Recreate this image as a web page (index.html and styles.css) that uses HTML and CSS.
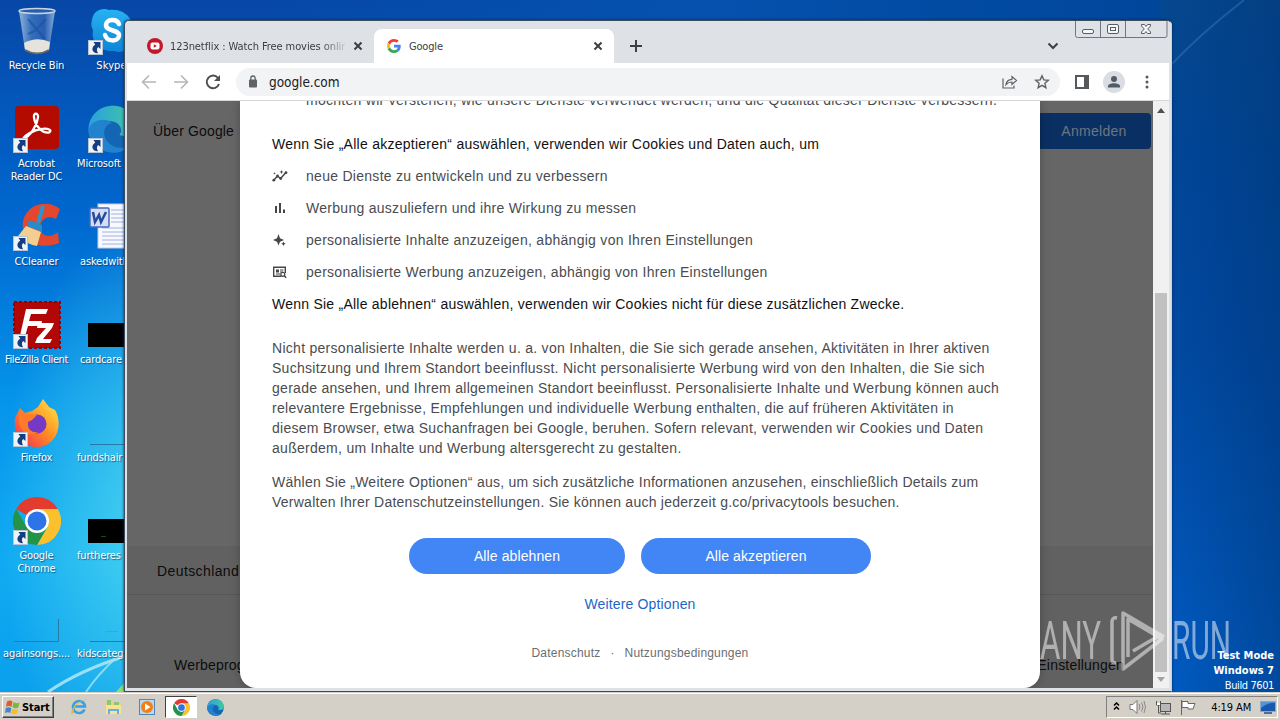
FILE: index.html
```html
<!DOCTYPE html>
<html lang="de">
<head>
    <meta charset="utf-8">
    <title>Google</title>
    <link rel="stylesheet" href="styles.css">
</head>
<body>
<svg width="0" height="0" class="defs">
    <defs>
        <linearGradient id="binGlass" x1="0" x2="1"><stop offset="0" stop-color="#a9c4e4"/><stop offset=".35" stop-color="#3d74bd"/><stop offset=".7" stop-color="#2c62b2"/><stop offset="1" stop-color="#9dbbe0"/></linearGradient>
        <linearGradient id="edgeTop" x1="0" x2="1"><stop offset="0" stop-color="#2b9fe0"/><stop offset="1" stop-color="#41c9a0"/></linearGradient>
        <linearGradient id="fox" x1="1" y1="0" x2="0" y2="1"><stop offset="0" stop-color="#fff04a"/><stop offset=".5" stop-color="#ff8a22"/><stop offset="1" stop-color="#f0245e"/></linearGradient>
        <linearGradient id="skype" x1="0" y1="0" x2="0" y2="1"><stop offset="0" stop-color="#28b2f2"/><stop offset="1" stop-color="#0c86d6"/></linearGradient>
        <symbol id="shortcut" viewBox="0 0 15 15">
            <rect x=".5" y=".5" width="14" height="14" fill="#eef3f8" stroke="#b7c3d2"/>
            <path d="M5.500 2H12.500V9L10.200 7C8.500 8.500 8.500 10.500 10 13.200 5 13.500 1.800 8.500 7.200 4.500z" fill="#153e82"/>
        </symbol>
        <symbol id="chrome" viewBox="0 0 48 48">
            <path d="M24 24L3.200 12A24 24 0 0 1 44.800 12z" fill="#e33b2e"/>
            <path d="M24 12H44.800A24 24 0 0 1 24 48L34.400 30z" fill="#fbc02d"/>
            <path d="M24 48A24 24 0 0 1 3.200 12L13.600 30 24 36 34.400 30z" fill="#239347"/>
            <circle cx="24" cy="24" r="12" fill="#fff"/>
            <circle cx="24" cy="24" r="9.500" fill="#2d74e8"/>
        </symbol>
        <symbol id="edge" viewBox="0 0 48 48">
            <circle cx="24" cy="24" r="23.500" fill="#1465b4"/>
            <path d="M.5 24C2-5 44-8 47.500 21c.8 9-9 12-16 9 5-7-2-15-12-14C9 17 3 22 .5 27z" fill="url(#edgeTop)"/>
            <path d="M.5 25C3 14 18 12 24 18c-9 2-10 13-4 19 5 6 14 8 22 3-6 9-20 10-30 4C4 39 0 32 .5 25z" fill="#2182cd"/>
        </symbol>
    </defs>
</svg>

<div class="desktop">
    <svg class="rays" width="1280" height="720" viewBox="0 0 1280 720">
        <path d="M48 692Q80 670 126 656" stroke="#b8ecf9" stroke-width="3" fill="none" opacity=".8"/>
        <path d="M86 692Q98 674 118 656" stroke="#a3e5f6" stroke-width="2" fill="none" opacity=".8"/>
        <path d="M116 692l9-10v10z" fill="#8fe06a"/>
        <path d="M1170 66Q1200 34 1244 0" stroke="#5c96cf" stroke-width="2" fill="none" opacity=".3"/>
    </svg>

    <div class="shortcuts">
        <div class="shortcut">
            <svg width="48" height="48" viewBox="0 0 48 48">
                <path d="M6 4L12 43Q24 50 36 43L42 4z" fill="url(#binGlass)" opacity=".85"/>
                <path d="M11 36Q24 29 37 35L36 43Q24 50 12 43z" fill="#e6e2dc"/>
                <path d="M12 43Q24 50 36 43" stroke="#6d665f" stroke-width="2" fill="none"/>
                <ellipse cx="24" cy="4" rx="18" ry="2.500" fill="#2a5da8" stroke="#c5d3e2" stroke-width="1.500"/>
                <path d="M15 12L32 32M33 12L22 24l-7 3" stroke="#184fa3" stroke-width="2" fill="none" opacity=".6"/>
            </svg>
            <span>Recycle Bin</span>
        </div>
        <div class="shortcut">
            <svg width="48" height="48" viewBox="0 0 48 48">
                <rect x="2" y="1" width="44" height="43" rx="4" fill="#b30b00"/>
                <path d="M10 34C18 31 24 20 25 12.500c.6-5-5-5-4 0 1 8 8 16 15 15 4-2-1-5-8-3.500-7 1-16 6-18 10" fill="none" stroke="#fff" stroke-width="2.300"/>
                <use href="#shortcut" x="0" y="33" width="15" height="15"/>
            </svg>
            <span>Acrobat<br>Reader DC</span>
        </div>
        <div class="shortcut">
            <svg width="48" height="48" viewBox="0 0 48 48">
                <path d="M47 6C36-3 15-1 10 18c-3 20 17 30 36 22l-1-11c-8 7-18 4-18-5 1-9 9-12 16-8z" fill="#e3472e"/>
                <path d="M30 3L25 20" stroke="#2c95ce" stroke-width="4"/>
                <path d="M16 17l13 5 0 7-15-6z" fill="#278dca"/>
                <path d="M13 23l15 6-4 14Q15 42 5 33z" fill="#f2cf91"/>
                <use href="#shortcut" x="0" y="33" width="15" height="15"/>
            </svg>
            <span>CCleaner</span>
        </div>
        <div class="shortcut">
            <svg width="48" height="48" viewBox="0 0 48 48">
                <rect x="1" y="1" width="46" height="46" fill="#b20707" stroke="#930303" stroke-width="2" stroke-dasharray="3 2"/>
                <path d="M13 8H35L33 13H18l-2 7H29l-1 5H15L11 39H6zM25 22H41L39 27 30 38H39l-2 4H22l2-5 9-10H24z" fill="#fff"/>
                <use href="#shortcut" x="0" y="33" width="15" height="15"/>
            </svg>
            <span class="tight">FileZilla Client</span>
        </div>
        <div class="shortcut">
            <svg width="48" height="48" viewBox="0 0 48 48">
                <path d="M2 19L7 9l5 5 7-2 6-4 5-8 6 8 6 3c8 13 3 35-17 37C11 49 0 37 2 19z" fill="url(#fox)"/>
                <circle cx="24" cy="25" r="9.500" fill="#743ac5"/>
                <path d="M6 14l8 1 10 1-5 5-4 2c-1 7 3 11 10 10-9 6-18-1-19-10z" fill="#ff7b28"/>
                <use href="#shortcut" x="0" y="33" width="15" height="15"/>
            </svg>
            <span>Firefox</span>
        </div>
        <div class="shortcut">
            <svg width="48" height="48" viewBox="0 0 48 48">
                <use href="#chrome" width="48" height="48"/>
                <use href="#shortcut" x="0" y="33" width="15" height="15"/>
            </svg>
            <span>Google<br>Chrome</span>
        </div>
        <div class="shortcut">
            <svg width="48" height="48" viewBox="0 0 48 48"><path d="M1 46.500H45.500V24" fill="none" stroke="#257ba5"/></svg>
            <span>againsongs....</span>
        </div>
        <div class="shortcut">
            <svg width="48" height="48" viewBox="0 0 48 48">
                <path d="M4 13C5 3 15 0 21 3c17-2 26 11 24 23 3 13-9 22-19 18C10 45 3 34 5 23c-2-3-2-7-1-10z" fill="url(#skype)"/>
                <path d="M31 17c-2-6-13-5-13 1 0 7 14 4 13 11-1 6-12 6-14-1" fill="none" stroke="#fff" stroke-width="4.500" stroke-linecap="round"/>
                <use href="#shortcut" x="0" y="33" width="15" height="15"/>
            </svg>
            <span class="skype">Skype</span>
        </div>
        <div class="shortcut">
            <svg width="48" height="48" viewBox="0 0 48 48">
                <use href="#edge" width="48" height="48"/>
                <use href="#shortcut" x="0" y="33" width="15" height="15"/>
            </svg>
            <span class="wide">Microsoft</span>
        </div>
        <div class="shortcut">
            <svg width="48" height="48" viewBox="0 0 48 48">
                <rect x="10" y="1" width="38" height="44" fill="#f7f9ff" stroke="#c3cbe3"/>
                <path d="M23 7H44M23 11H44M23 15H44M23 19H44M14 25H44M14 29H44M14 33H44M14 37H44M14 41H44" stroke="#a2b1df"/>
                <rect x="2" y="5" width="19" height="19" rx="1" fill="#d5def5" stroke="#4868b6" stroke-width="1.500"/>
                <path d="M5 9l2 10 4-7 2 7 5-10" fill="none" stroke="#254b9e" stroke-width="2.500"/>
            </svg>
            <span class="wide w3">askedwith</span>
        </div>
        <div class="shortcut">
            <svg width="48" height="48" viewBox="0 0 48 48"><rect y="22" width="48" height="24" fill="#000"/></svg>
            <span class="wide w3">cardcare</span>
        </div>
        <div class="shortcut">
            <svg width="48" height="48" viewBox="0 0 48 48"><path d="M2 45.500H48" stroke="#257ba5"/></svg>
            <span class="wide">fundshair</span>
        </div>
        <div class="shortcut">
            <svg width="48" height="48" viewBox="0 0 48 48"><rect y="22" width="48" height="24" fill="#000"/><path d="M13 39.500h5" stroke="#134c14"/></svg>
            <span class="wide">furtheres</span>
        </div>
        <div class="shortcut">
            <svg width="48" height="48" viewBox="0 0 48 48"><path d="M2 46.500H48" stroke="#257ba5"/><path d="M17 36.500H30" stroke="#559fbb"/></svg>
            <span class="wide">kidscateg</span>
        </div>
    </div>

    <div class="window">
        <div class="tabstrip">
            <div class="tab">
                <svg width="16" height="16" viewBox="0 0 16 16"><circle cx="8" cy="8" r="8" fill="#c4172c"/><rect x="3.500" y="4.500" width="9" height="7" rx="2" fill="#fff"/><path d="M6.800 6.200v3.600L9.800 8z" fill="#c4172c"/></svg>
                <span class="tab-title faded">123netflix : Watch Free movies onlin</span>
                <svg class="close" width="10" height="10" viewBox="0 0 10 10"><path d="M1.500 1.500l7 7M8.500 1.500l-7 7"/></svg>
            </div>
            <div class="tab active">
                <svg width="14" height="14" viewBox="0 0 48 48">
                    <path fill="#ea4335" d="M24 9.500c3.500 0 6.700 1.200 9.200 3.600l6.900-6.900C35.900 2.400 30.500 0 24 0 14.600 0 6.500 5.400 2.600 13.200l8 6.200C12.400 13.700 17.700 9.500 24 9.500z"/>
                    <path fill="#4285f4" d="M47 24.500c0-1.600-.2-3.100-.4-4.500H24v9h12.900c-.6 3-2.300 5.500-4.800 7.200l7.700 6C44.400 38 47 31.800 47 24.500z"/>
                    <path fill="#fbbc05" d="M10.500 28.600c-1-3-1-6.200 0-9.200l-8-6.200C-.8 20-.8 28 2.600 34.800z"/>
                    <path fill="#34a853" d="M24 48c6.500 0 11.900-2.100 15.900-5.800l-7.700-6C30 37.700 27.200 38.500 24 38.500c-6.300 0-11.600-4.200-13.500-9.900l-8 6.200C6.500 42.600 14.600 48 24 48z"/>
                </svg>
                <span class="tab-title">Google</span>
                <svg class="close" width="10" height="10" viewBox="0 0 10 10"><path d="M1.500 1.500l7 7M8.500 1.500l-7 7"/></svg>
            </div>
            <svg class="new-tab" width="12" height="12" viewBox="0 0 12 12"><path d="M6 0v12M0 6h12"/></svg>
            <svg class="chevron" width="12" height="8" viewBox="0 0 12 8"><path d="M1.500 1.500L6 6l4.500-4.500"/></svg>
            <svg class="caption" width="94" height="18" viewBox="0 0 94 18">
                <path d="M.5 0v14.500a2 2 0 0 0 2 2H90a2 2 0 0 0 2-2V0M25.500 0v16.500M50.500 0v16.500" fill="none" stroke="#6f7681"/>
                <g fill="#f8f8f8" stroke="#555c66">
                    <rect x="7.500" y="8.500" width="11" height="4" rx="1.500"/>
                    <rect x="32.500" y="3.500" width="11" height="9" rx="1.500"/>
                    <rect x="35.500" y="6.500" width="5" height="3"/>
                    <path d="M66.500 3.500h3l1.500 2 1.500-2h3v1.500L72.700 8l2.800 3v1.500h-3l-1.500-2-1.500 2h-3V11l2.800-3-2.800-3z"/>
                </g>
            </svg>
        </div>

        <div class="toolbar">
            <svg class="nav off" width="16" height="16" viewBox="0 0 16 16"><path d="M15 8H2M8 1.500L1.500 8 8 14.500"/></svg>
            <svg class="nav off" width="16" height="16" viewBox="0 0 16 16"><path d="M1 8h13M8 1.500L14.500 8 8 14.500"/></svg>
            <svg class="nav" width="16" height="16" viewBox="0 0 16 16"><path d="M13 4A6.300 6.300 0 1 0 14 10"/><path d="M15 1v6H9z" class="solid"/></svg>
            <div class="omnibox">
                <svg width="10" height="13" viewBox="0 0 10 13"><rect x="1" y="4.500" width="8" height="8" rx="1" fill="#5f6368"/><path d="M2.800 5V3.200a2.200 2.200 0 0 1 4.400 0V5" fill="none" stroke="#5f6368" stroke-width="1.300"/></svg>
                <span class="url">google.com</span>
                <svg width="16" height="14" viewBox="0 0 16 14" fill="none" stroke="#5f6368" stroke-width="1.200"><path d="M1 3.500V13h11v-2.500"/><path d="M4 9.500C4.500 6 6.500 4.500 10 4.300V1.500l4.500 4-4.500 4V7C7.500 7 5.500 7.800 4 9.500z"/></svg>
                <svg width="16" height="16" viewBox="0 0 16 16"><path d="M8 1.800l1.800 4.100 4.500.4-3.400 3 1 4.400L8 11.400l-3.900 2.300 1-4.400-3.400-3 4.500-.4z" fill="none" stroke="#5f6368" stroke-width="1.400"/></svg>
            </div>
            <svg width="14" height="14" viewBox="0 0 14 14"><path d="M0 0h14v14H0zM2 2v10h7V2z" fill="#55585c" fill-rule="evenodd"/></svg>
            <svg class="avatar" width="22" height="22" viewBox="0 0 22 22"><circle cx="11" cy="11" r="11" fill="#dadde4"/><circle cx="11" cy="8" r="3" fill="#515a67"/><path d="M5 16.500v-1.200c0-4 12-4 12 0v1.200z" fill="#515a67"/></svg>
            <svg width="4" height="14" viewBox="0 0 4 14" fill="#55585c"><circle cx="2" cy="2" r="1.500"/><circle cx="2" cy="7" r="1.500"/><circle cx="2" cy="12" r="1.500"/></svg>
        </div>

        <div class="viewport">
            <div class="page">
                <div class="page-top"><span>Über Google</span><span class="signin">Anmelden</span></div>
                <div class="country">Deutschland</div>
                <div class="page-bottom"><span>Werbeprogramme</span><span>Einstellungen</span></div>

                <div class="consent">
                    <ul class="list">
                        <li class="l1">möchten wir verstehen, wie unsere Dienste verwendet werden, und die Qualität dieser Dienste verbessern.</li>
                    </ul>
                    <p class="strong l2">Wenn Sie „Alle akzeptieren“ auswählen, verwenden wir Cookies und Daten auch, um</p>
                    <ul class="list">
                        <li>
                            <svg width="16" height="16" viewBox="0 0 16 16"><path d="M1.500 12.500L5.500 8l3 2.500 5.500-6" fill="none" stroke="#444746" stroke-width="1.500"/><circle cx="1.800" cy="12.200" r="1.400"/><circle cx="5.500" cy="8" r="1.400"/><circle cx="8.700" cy="10.500" r="1.400"/><circle cx="14" cy="4.700" r="1.400"/><path d="M9.500 2l.6 1.400 1.400.6-1.400.6L9.500 6l-.6-1.400L7.500 4l1.400-.6zM2.500 4l.4 1 1 .4-1 .4-.4 1-.4-1-1-.4 1-.4z"/></svg>
                            <span>neue Dienste zu entwickeln und zu verbessern</span>
                        </li>
                        <li>
                            <svg width="16" height="16" viewBox="0 0 16 16"><path d="M3 6h2v7H3zM7 3h2v10H7zM11 9.500h2V13h-2z"/></svg>
                            <span>Werbung auszuliefern und ihre Wirkung zu messen</span>
                        </li>
                        <li>
                            <svg width="16" height="16" viewBox="0 0 16 16"><path d="M6.500 2L8 6.300 12 8 8 9.700 6.500 13.500 5 9.700 1 8l4-1.700zM11.500 9.500l.7 1.600 1.600.7-1.600.7-.7 1.600-.7-1.600-1.600-.7 1.600-.7z"/></svg>
                            <span>personalisierte Inhalte anzuzeigen, abhängig von Ihren Einstellungen</span>
                        </li>
                        <li>
                            <svg width="16" height="16" viewBox="0 0 16 16"><path d="M9 12.300H1.700V3.200h11.600V9" fill="none" stroke="#444746" stroke-width="1.400"/><path d="M4 5.500h3v3H4zM8 5.500h3.500v1H8zM8 7.500h3v1H8zM4 9.500h4v1H4z"/><circle cx="10.800" cy="10.300" r="2" fill="none" stroke="#444746" stroke-width="1.200"/><path d="M12.200 11.800l2 2" stroke="#444746" stroke-width="1.400"/></svg>
                            <span>personalisierte Werbung anzuzeigen, abhängig von Ihren Einstellungen</span>
                        </li>
                    </ul>
                    <p class="strong">Wenn Sie „Alle ablehnen“ auswählen, verwenden wir Cookies nicht für diese zusätzlichen Zwecke.</p>
                    <p class="details">Nicht personalisierte Inhalte werden u. a. von Inhalten, die Sie sich gerade ansehen, Aktivitäten in Ihrer aktiven<br>
                        Suchsitzung und Ihrem Standort beeinflusst. Nicht personalisierte Werbung wird von den Inhalten, die Sie sich<br>
                        gerade ansehen, und Ihrem allgemeinen Standort beeinflusst. Personalisierte Inhalte und Werbung können auch<br>
                        relevantere Ergebnisse, Empfehlungen und individuelle Werbung enthalten, die auf früheren Aktivitäten in<br>
                        diesem Browser, etwa Suchanfragen bei Google, beruhen. Sofern relevant, verwenden wir Cookies und Daten<br>
                        außerdem, um Inhalte und Werbung altersgerecht zu gestalten.</p>
                    <p class="more">Wählen Sie „Weitere Optionen“ aus, um sich zusätzliche Informationen anzusehen, einschließlich Details zum<br>
                        Verwalten Ihrer Datenschutzeinstellungen. Sie können auch jederzeit g.co/privacytools besuchen.</p>
                    <div class="buttons">
                        <button class="reject">Alle ablehnen</button>
                        <button class="accept">Alle akzeptieren</button>
                    </div>
                    <a class="options">Weitere Optionen</a>
                    <div class="legal"><span>Datenschutz</span><span>·</span><span>Nutzungsbedingungen</span></div>
                </div>
            </div>
            <div class="scrollbar">
                <svg width="8" height="5" viewBox="0 0 8 5"><path d="M0 5l4-5 4 5z" fill="#505050"/></svg>
                <div class="thumb"></div>
                <svg width="8" height="5" viewBox="0 0 8 5"><path d="M0 0l4 5 4-5z" fill="#a3a3a3"/></svg>
            </div>
        </div>
    </div>

    <svg class="watermark" width="200" height="70" viewBox="1036 605 200 70">
        <g class="mark-text">
            <text x="1040" y="659" textLength="61" lengthAdjust="spacingAndGlyphs">ANY</text>
            <text x="1172" y="659" textLength="59" lengthAdjust="spacingAndGlyphs">RUN</text>
        </g>
        <path d="M1117 618q-5-1-5 4v38q0 3 4 3M1128 657V619l34 20-39 30V613l41 24M1133 651l29-17" fill="none" stroke="#fff" stroke-width="3.500" stroke-linejoin="round"/>
    </svg>

    <div class="build">
        <b>Test Mode</b>
        <b>Windows 7</b>
        <span>Build 7601</span>
    </div>

    <div class="taskbar">
        <div class="start">
            <svg width="16" height="16" viewBox="0 0 16 16"><path d="M2 2.500q3-2 5.500 0L6.500 8Q4 6.200 1 7.800z" fill="#e35b25"/><path d="M8.500 3q3 2 6 .5l-1.200 5Q10.500 10 7.500 8.300z" fill="#7cb63c"/><path d="M.8 9q3-1.500 5.500.2L5.200 14Q3 12.500 0 14z" fill="#3e87cf"/><path d="M7.300 9.800q3 1.500 5.800.2L12 14.500q-3 1.500-5.800 0z" fill="#f6bd28"/></svg>
            <b>Start</b>
        </div>
        <div class="quick">
            <svg width="18" height="18" viewBox="0 0 18 18"><path d="M14.500 11.500A6 6 0 1 1 15 8.500H5" fill="none" stroke="#36a1e5" stroke-width="2.600"/><path d="M2 16.500C-2 13 11-1 17 2c-6-1-15 8-13 12" fill="#e9b732"/></svg>
        </div>
        <div class="quick">
            <svg width="18" height="18" viewBox="0 0 18 18"><path d="M1 3h7l1 2h8v10H1z" fill="#efcf73"/><path d="M3 2h4v5H3zM10 4h5v4h-5z" fill="#8dc770"/><path d="M2 7h15v9H2z" fill="#f8e296"/><path d="M4 16v-5h11v5h-2v-3H6v3z" fill="#62b2df"/></svg>
        </div>
        <div class="quick">
            <svg width="16" height="16" viewBox="0 0 16 16"><rect x=".5" y=".5" width="15" height="15" fill="#bcd7ed" stroke="#5486b5"/><circle cx="8" cy="8" r="6" fill="#f08018"/><path d="M6 4.500v7L11.500 8z" fill="#fff"/></svg>
        </div>
        <div class="quick current"><svg width="17" height="17"><use href="#chrome" width="17" height="17"/></svg></div>
        <div class="quick"><svg width="17" height="17"><use href="#edge" width="17" height="17"/></svg></div>
        <div class="tray">
            <svg width="7" height="10" viewBox="0 0 7 10"><path d="M1 3.500L3.500 1 6 3.500M1 7.500L3.500 5 6 7.500" fill="none" stroke="#000" stroke-width="1.500"/></svg>
            <svg width="17" height="14" viewBox="0 0 17 14"><path d="M1 4.500h3l4-4v13l-4-4H1z" fill="#fff" stroke="#777"/><path d="M10 4q2 3 0 6M12.500 2.500q3 4.500 0 9M15 1q3 6 0 12" fill="none" stroke="#888"/></svg>
            <svg width="17" height="15" viewBox="0 0 17 15"><rect x="5.500" y="3.500" width="10" height="8" fill="#b8b8b8" stroke="#555"/><path d="M6 14h9M10.500 11v3M1.500 1v4h4V1M3.500 5v8H6" fill="none" stroke="#555"/><path d="M2 3h3v2H2z" fill="#fff"/></svg>
            <svg width="17" height="15" viewBox="0 0 17 15"><path d="M1.500 0v15" stroke="#666"/><path d="M2 1.500h6v2h7L13 9H8V7.500H2z" fill="#fff" stroke="#666"/></svg>
            <span class="clock">4:19 AM</span>
            <svg width="16" height="13" viewBox="0 0 16 13"><rect x=".5" y=".5" width="15" height="10" fill="#1858ad" stroke="#8ba8cc"/><path d="M1 7Q8 1 15 2V1H1z" fill="#4f95dc"/><path d="M4 12h8" stroke="#526d91" stroke-width="2"/></svg>
        </div>
    </div>
</div>
</body>
</html>
```

FILE: styles.css
```css
* {
    box-sizing: border-box;
}

body {
    margin: 0;
    font-family: "Liberation Sans", Arial, sans-serif;
    font-size: 14px;
}

svg {
    display: block;
    flex: none;
}

p, ul {
    margin: 0;
    padding: 0;
}

.defs {
    position: absolute;
}

/* Desktop */
.desktop {
    position: relative;
    width: 1280px;
    height: 720px;
    overflow: hidden;
    background:
        radial-gradient(ellipse 150px 300px at 150px 520px, rgba(90, 225, 240, .75), transparent),
        linear-gradient(90deg, transparent 240px, #0551ad 700px, #00469b 1160px, transparent 1161px),
        linear-gradient(90deg, transparent 1160px, rgba(0, 50, 110, .45)) no-repeat 0 0 / 1280px 692px,
        linear-gradient(#054890, #00479a 150px, #004aa4 350px, #005cc4 670px) no-repeat 1160px 0 / 120px 692px,
        linear-gradient(#0747a6, #0068d0 220px, #0594ea 400px, #10aaf2 560px, #0aa0ec 690px);
}

.rays {
    position: absolute;
}

.shortcuts {
    position: absolute;
    top: 7px;
    left: 0;
    display: grid;
    grid-template-rows: repeat(7, 98px);
    grid-template-columns: 73px 73px;
    column-gap: 2px;
    grid-auto-flow: column;
}

.shortcut {
    display: flex;
    flex-direction: column;
    align-items: center;
    gap: 4px;
    color: #fff;
    font: 11px/13px "DejaVu Sans Condensed", "DejaVu Sans", sans-serif;
    letter-spacing: -.15px;
    text-align: center;
    text-shadow: 1px 1px 1px rgba(0, 30, 70, .6);
    white-space: nowrap;
}

.shortcut .tight {
    letter-spacing: -.4px;
}

.shortcut .wide {
    align-self: flex-start;
    margin-left: 2px;
}

.shortcut .w3 {
    margin-left: 5px;
}

.shortcut .skype {
    letter-spacing: .1px;
}

.build {
    position: absolute;
    right: 6px;
    bottom: 27px;
    display: flex;
    flex-direction: column;
    text-align: right;
    color: #fff;
    font: 11px/15px "DejaVu Sans Condensed", "DejaVu Sans", sans-serif;
}

.build span {
    letter-spacing: -.4px;
}

/* Browser window */
.window {
    position: absolute;
    left: 124px;
    top: 20px;
    width: 1048px;
    height: 672px;
    display: flex;
    flex-direction: column;
    border: 1px solid #3d4d60;
    border-right-color: #c9d2de;
    border-radius: 5px 5px 0 0;
    padding: 0 2px 3px;
    background: #dee1e6;
    box-shadow: 0 0 3px #012a5c;
    overflow: hidden;
}

.tabstrip {
    display: flex;
    align-items: center;
    height: 42px;
    padding: 8px 0 0 8px;
    background: #dee1e6;
    flex: none;
}

.tab {
    display: flex;
    align-items: center;
    width: 239px;
    height: 34px;
    padding: 0 11px 0 12px;
    font: 11px "DejaVu Sans Condensed", "DejaVu Sans", sans-serif;
    color: #3c4043;
}

.tab.active {
    width: 240px;
    background: #fff;
    border-radius: 8px 8px 0 0;
    padding-left: 13px;
}

.tab-title {
    flex: 1;
    margin: 0 8px;
    white-space: nowrap;
    overflow: hidden;
    letter-spacing: -.18px;
}

.faded {
    margin-left: 7px;
    letter-spacing: -.08px;
    -webkit-mask-image: linear-gradient(90deg, #000 150px, transparent 180px);
    mask-image: linear-gradient(90deg, #000 150px, transparent 180px);
}

.close, .new-tab, .chevron {
    fill: none;
    stroke: #3c4043;
    stroke-width: 2;
}

.new-tab {
    margin-left: 16px;
}

.chevron {
    margin-left: auto;
}

.caption {
    align-self: flex-start;
    margin: -8px 0 0 16px;
}

.toolbar {
    display: flex;
    align-items: center;
    height: 38px;
    padding: 0 20px 0 14px;
    border-bottom: 1px solid #d5d7da;
    background: #fff;
    flex: none;
}

.nav {
    margin-right: 16px;
    fill: none;
    stroke: #4c5054;
    stroke-width: 2;
}

.nav.off {
    stroke: #b5b7ba;
    stroke-width: 1.6;
}

.nav .solid {
    fill: #4c5054;
    stroke: none;
}

.omnibox {
    display: flex;
    align-items: center;
    flex: 1;
    height: 28px;
    margin: 0 15px 0 -1px;
    padding: 0 10px 0 12px;
    border-radius: 14px;
    background: #f1f3f4;
    gap: 16px;
}

.url {
    flex: 1;
    margin-left: -5px;
    font: 13.5px "DejaVu Sans Condensed", "DejaVu Sans", sans-serif;
    letter-spacing: -.05px;
    color: #202124;
}

.avatar {
    margin: 0 20px 0 14px;
}

/* Page under the dialog */
.viewport {
    display: flex;
    flex: 1;
    min-height: 0;
}

.page {
    position: relative;
    flex: 1;
    display: flex;
    flex-direction: column;
    background: #666;
    overflow: hidden;
    color: #0c0c0c;
}

.page-top {
    display: flex;
    justify-content: space-between;
    align-items: center;
    height: 60px;
    padding: 0 2px 0 26px;
    margin-bottom: auto;
    letter-spacing: .15px;
}

.signin {
    width: 114px;
    height: 36px;
    border-radius: 4px;
    background: #0a2f62;
    color: #6e767f;
    line-height: 36px;
    text-align: center;
    letter-spacing: .3px;
}

.country {
    height: 49px;
    padding-left: 30px;
    border-bottom: 1px solid #575757;
    background: #616161;
    line-height: 50px;
    letter-spacing: .4px;
}

.page-bottom {
    display: flex;
    justify-content: space-between;
    height: 93px;
    padding: 61px 29px 0 47px;
    background: #616161;
    line-height: 18px;
    letter-spacing: .2px;
}

/* Consent dialog */
.consent {
    position: absolute;
    left: 113px;
    top: 0;
    width: 800px;
    height: 587px;
    padding: 0 32px;
    border-radius: 0 0 16px 16px;
    background: #fff;
    box-shadow: 0 0 10px rgba(0, 0, 0, .25);
    color: #4a4c50;
    line-height: 20px;
    letter-spacing: .28px;
    white-space: nowrap;
}

.list {
    list-style: none;
}

.list li {
    display: flex;
    align-items: center;
    gap: 18px;
    height: 32px;
}

.list svg {
    fill: #444746;
}

.list .l1 {
    height: 20px;
    margin: -11px 0 24px;
    padding-left: 34px;
}

.strong {
    color: #111;
    letter-spacing: .24px;
}

.l2 {
    margin-bottom: 6px;
    letter-spacing: .26px;
}

.list:nth-of-type(2) {
    margin-bottom: 6px;
}

.details {
    margin-top: 24px;
}

.more {
    margin-top: 14px;
    letter-spacing: .25px;
}

.buttons {
    display: flex;
    justify-content: center;
    gap: 16px;
    margin: 26px 0 20px;
}

.buttons button {
    height: 36px;
    padding: 0;
    border: 0;
    border-radius: 18px;
    background: #4285f4;
    color: #fff;
    font: inherit;
    letter-spacing: .1px;
}

.reject {
    width: 216px;
}

.accept {
    width: 230px;
}

.options {
    display: block;
    color: #1f66c9;
    text-align: center;
    letter-spacing: .15px;
}

.legal {
    display: flex;
    justify-content: center;
    gap: 10px;
    margin-top: 29px;
    color: #6b6e72;
    font-size: 12px;
    letter-spacing: .2px;
}

.scrollbar {
    display: flex;
    flex-direction: column;
    align-items: center;
    width: 16px;
    padding: 7px 0 6px;
    background: #f1f1f1;
}

.thumb {
    width: 12px;
    height: 379px;
    margin: auto 0 5px;
    background: #c1c1c1;
}

.watermark {
    position: absolute;
    left: 1036px;
    top: 605px;
    opacity: .5;
}

.mark-text {
    fill: #fff;
    font: 400 53px Roboto, sans-serif;
}

/* Taskbar */
.taskbar {
    position: absolute;
    left: 0;
    bottom: 0;
    width: 1280px;
    height: 28px;
    display: flex;
    align-items: center;
    padding: 1px 2px 0;
    border-top: 1px solid #d4d0c8;
    box-shadow: inset 0 1px #fff;
    background: #d4d0c8;
    font: 11px "DejaVu Sans Condensed", "DejaVu Sans", sans-serif;
}

.start {
    display: flex;
    align-items: center;
    gap: 1px;
    width: 52px;
    height: 22px;
    margin-right: 9px;
    padding-left: 2px;
    border: 1px solid;
    border-color: #fff #404040 #404040 #fff;
    box-shadow: inset -1px -1px #808080;
    letter-spacing: -.1px;
}

.quick {
    display: flex;
    align-items: center;
    justify-content: center;
    width: 32px;
    height: 22px;
    margin-right: 2px;
}

.current {
    border: 1px solid;
    border-color: #404040 #fff #fff #404040;
    background: #fff;
}

.tray {
    display: flex;
    align-items: center;
    justify-content: space-between;
    width: 172px;
    height: 22px;
    margin-left: auto;
    padding: 0 1px 0 6px;
    border: 1px solid;
    border-color: #808080 #fff #fff #808080;
}

.clock {
    margin-left: 5px;
    letter-spacing: -.1px;
}
```
